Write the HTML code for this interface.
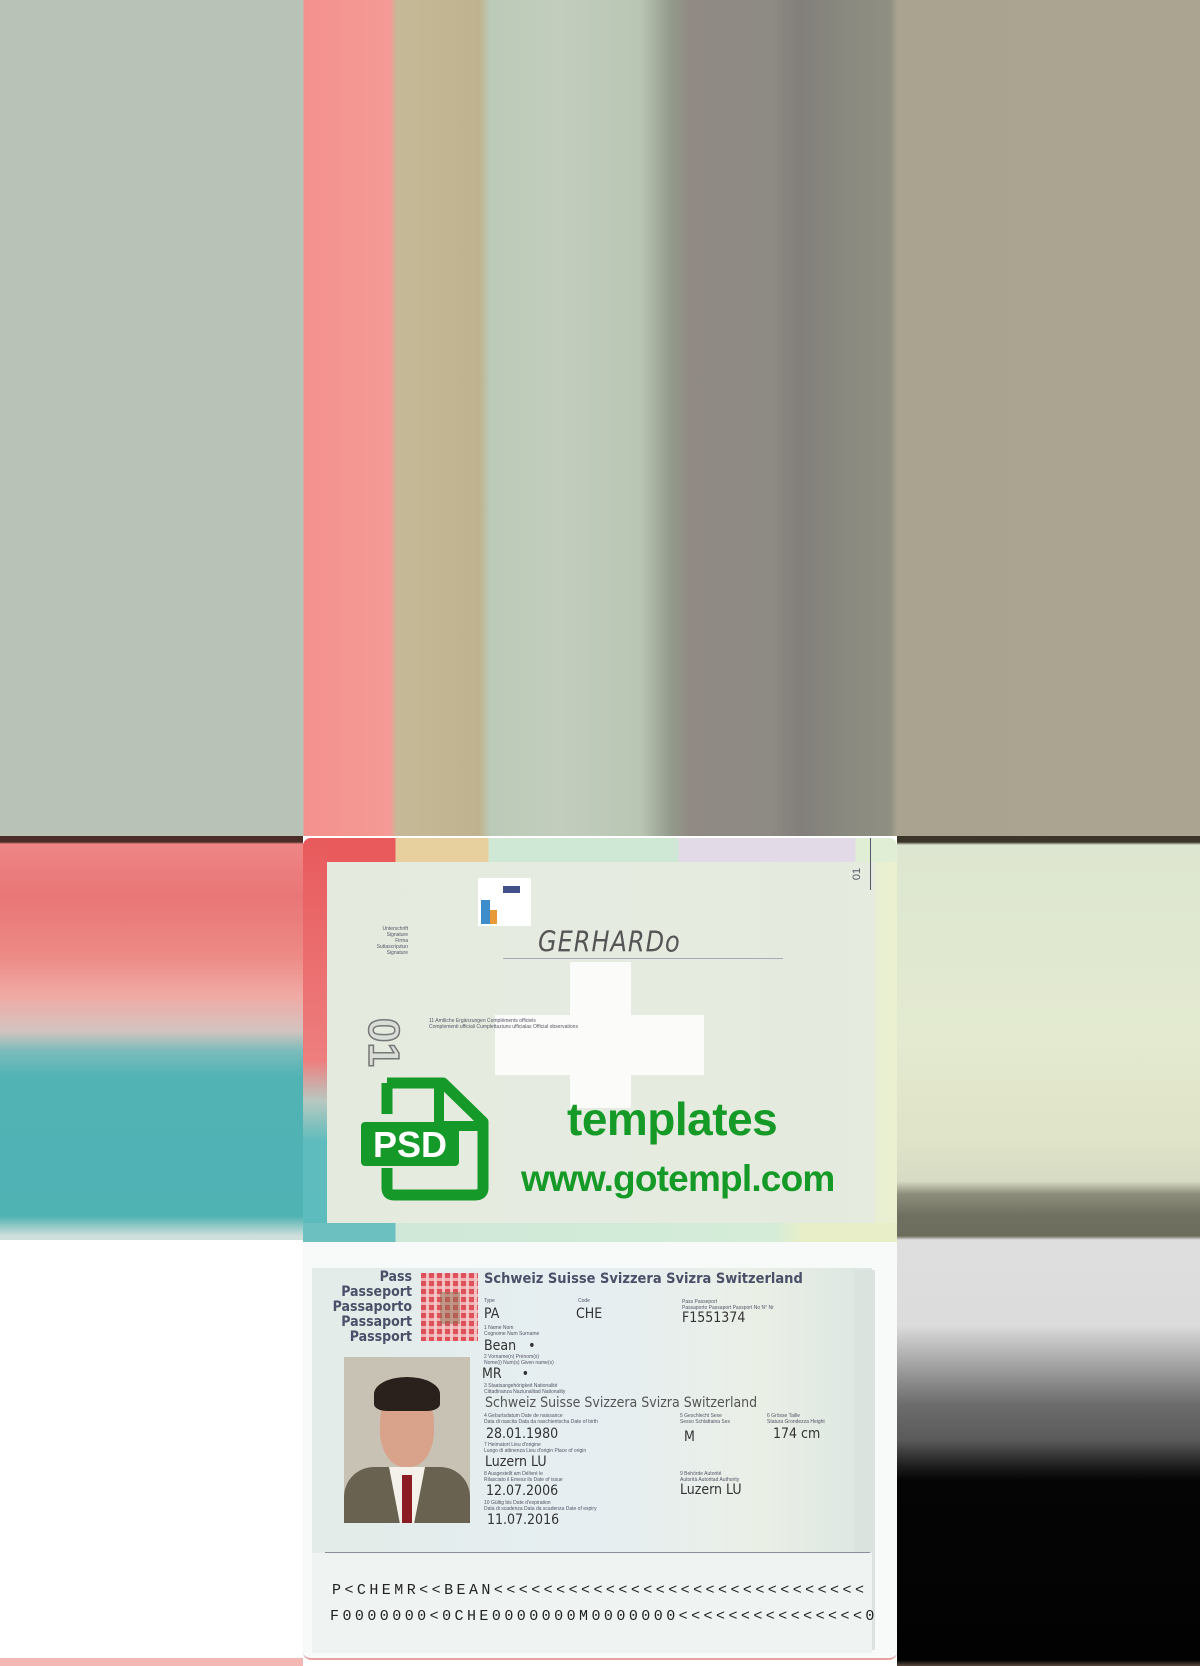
<!DOCTYPE html>
<html><head><meta charset="utf-8"><style>
*{margin:0;padding:0;box-sizing:border-box}
body{width:1200px;height:1666px;position:relative;overflow:hidden;background:#fff;font-family:"Liberation Sans",sans-serif}
.a{position:absolute}
.lbl{position:absolute;font-size:5px;color:#556;line-height:6px;white-space:nowrap}
.v{position:absolute;font-size:14px;color:#333;white-space:nowrap;font-family:"DejaVu Sans Condensed","Liberation Sans",sans-serif}
.pt{position:absolute;font-weight:bold;color:#4a5068;font-size:14px;font-family:"DejaVu Sans Condensed","Liberation Sans",sans-serif;white-space:nowrap}
</style></head><body>
<div class="a" style="left:0;top:0;width:1200px;height:836px;background:linear-gradient(90deg,#b9c2b6 0,#b9c2b6 303px,#f3918e 304px,#f59a96 390px,#c5b997 397px,#bfb38f 480px,#bccab8 490px,#c2cdbd 560px,#bac6b4 640px,#92998a 672px,#918a84 690px,#8e8a84 770px,#827f7a 800px,#8a8a80 850px,#8f8f82 890px,#a9a390 897px,#aaa491 1200px)"></div>
<div class="a" style="left:0;top:836px;width:303px;height:404px;background:linear-gradient(180deg,#4a2d28 0,#4a2d28 6px,#ee8585 8px,#e97677 60px,#ec8a86 120px,#f1aaa4 160px,#d3c3bf 195px,#7bbcbb 215px,#52b3b5 240px,#4fb2b3 380px,#cfdfdc 400px)"></div>
<div class="a" style="left:897px;top:836px;width:303px;height:404px;background:linear-gradient(180deg,#3a3528 0,#3a3528 6px,#dde6d0 9px,#e3ead0 200px,#e0e4c8 300px,#d8dbc4 345px,#8d8e7c 358px,#6f705f 380px,#6c6d5c 400px,#e0e0e0 404px)"></div>
<div class="a" style="left:897px;top:1240px;width:303px;height:426px;background:linear-gradient(180deg,#dedede 0,#dcdcdc 85px,#c6c6c6 100px,#8e8e8e 140px,#6c6c6c 165px,#5a5a5a 200px,#202020 225px,#050505 240px,#020202 420px,#5a4a40 426px)"></div>
<div class="a" style="left:0;top:1658px;width:303px;height:8px;background:#f4b8b4"></div>

<div class="a" style="left:303px;top:838px;width:594px;height:404px;border-radius:8px 8px 0 0;background:linear-gradient(90deg,#e6ecdf,#e9eee4 50%,#e4ecd9 90%,#eaf0cf);overflow:hidden">
 <div class="a" style="left:0;top:0;width:594px;height:24px;background:linear-gradient(90deg,#e85a5c 0,#e85a5c 92px,#e7cf9e 93px,#e7cf9e 185px,#cfe8d6 186px,#cfe8d6 375px,#e3dae8 376px,#e3dae8 552px,#dfeed5 553px)"></div>
 <div class="a" style="left:0;top:0;width:24px;height:404px;background:linear-gradient(180deg,#e85a5c,#ee7e7e 55%,#b8c8c0 65%,#5fbcbe 75%,#5cbcbd)"></div>
 <div class="a" style="left:0;top:385px;width:594px;height:19px;background:linear-gradient(90deg,#6cc0c0 0,#6cc0c0 92px,#cfe8d8 93px,#d4ecd8 470px,#e8efc8 500px)"></div>
 <div class="a" style="left:24px;top:24px;width:548px;height:361px;background:#e4eadf;opacity:.9"></div>
 <div class="a" style="left:267px;top:124px;width:61px;height:146px;background:#fbfcf9"></div>
 <div class="a" style="left:192px;top:177px;width:209px;height:60px;background:#fbfcf9"></div>
 <div class="a" style="left:175px;top:40px;width:53px;height:48px;background:#fff"></div>
 <div class="a" style="left:178px;top:62px;width:9px;height:24px;background:#3d8ccc"></div>
 <div class="a" style="left:187px;top:72px;width:7px;height:14px;background:#e89a3a"></div>
 <div class="a" style="left:200px;top:48px;width:17px;height:7px;background:#44508a"></div>
 <div class="a" style="left:567px;top:0;width:1px;height:52px;background:#556"></div>
 <div class="a" style="left:548px;top:30px;font-size:11px;color:#556;transform:rotate(-90deg)">01</div>
 <div class="lbl" style="left:55px;top:88px;text-align:right;width:50px">Unterschrift<br>Signature<br>Firma<br>Suttascripziun<br>Signature</div>
 <div class="a" style="left:235px;top:90px;font-family:'DejaVu Sans',sans-serif;font-weight:200;font-style:italic;font-size:24px;color:#555;letter-spacing:1px;transform:scaleY(1.2)">GERHARDo</div>
 <div class="a" style="left:200px;top:120px;width:280px;height:1px;background:#aab"></div>
 <div class="lbl" style="left:126px;top:180px">11 Amtliche Ergänzungen Compléments officiels<br>Complementi ufficiali Cumplettaziuns ufficialas Official observations</div>
 <div class="a" style="top:180px;font-size:44px;color:#d8ddd8;-webkit-text-stroke:1.5px #777;transform:rotate(90deg);transform-origin:left top;left:105px;font-weight:bold">01</div>
 <svg class="a" style="left:56px;top:238px" width="134" height="125" viewBox="0 0 134 125">
  <path d="M28 7 H84 L124 46 V112 Q124 119 116 119 H35 Q28 119 28 112 V92 M28 38 V7" fill="none" stroke="#159a2a" stroke-width="11" stroke-linejoin="round"/>
  <path d="M80 7 V44 Q80 50 86 50 H124" fill="none" stroke="#159a2a" stroke-width="10"/>
  <rect x="2" y="46" width="98" height="44" rx="4" fill="#159a2a"/>
  <text x="51" y="81" text-anchor="middle" font-family="Liberation Sans" font-weight="bold" font-size="36" fill="#fff">PSD</text>
 </svg>
 <div class="a" style="left:264px;top:254px;font-size:46px;font-weight:bold;color:#169a27;letter-spacing:-0.5px">templates</div>
 <div class="a" style="left:218px;top:320px;font-size:37px;font-weight:bold;color:#169a27;letter-spacing:-0.8px">www.gotempl.com</div>
</div>

<div class="a" style="left:303px;top:1242px;width:594px;height:418px;background:#f8faf9;border-radius:0 0 8px 8px;border-bottom:2px solid #e8a0a0"></div>
<div class="a" style="left:312px;top:1268px;width:560px;height:285px;background:linear-gradient(90deg,#e3ece8,#e6eef2 50%,#eaefe6 80%,#dce6e2)"></div>
<div class="a" style="left:855px;top:1270px;width:20px;height:380px;background:#dbe3df"></div>
<div class="a" style="left:312px;top:1553px;width:560px;height:100px;background:#eff3f2"></div>
<div class="a" style="left:325px;top:1552px;width:545px;height:1px;background:#8a8f99"></div>
<div class="pt" style="left:320px;top:1270px;width:92px;text-align:right;line-height:15px">Pass<br>Passeport<br>Passaporto<br>Passaport<br>Passport</div>
<div class="a" style="left:421px;top:1273px;width:57px;height:68px;background:repeating-linear-gradient(90deg,#e0505a 0 5px,#f3c0c2 5px 8px)"></div>
<div class="a" style="left:421px;top:1273px;width:57px;height:68px;background:repeating-linear-gradient(180deg,transparent 0 5px,rgba(243,200,200,.8) 5px 8px)"></div>
<div class="a" style="left:440px;top:1292px;width:20px;height:32px;background:rgba(140,110,80,.5)"></div>
<div class="pt" style="left:484px;top:1271px;font-size:14.5px">Schweiz Suisse Svizzera Svizra Switzerland</div>
<div class="lbl" style="left:484px;top:1298px">Type</div>
<div class="lbl" style="left:578px;top:1298px">Code</div>
<div class="lbl" style="left:682px;top:1299px">Pass Passeport<br>Passaporto Passaport Passport No N° Nr</div>
<div class="v" style="left:484px;top:1306px">PA</div>
<div class="v" style="left:576px;top:1306px">CHE</div>
<div class="v" style="left:682px;top:1310px">F1551374</div>
<div class="lbl" style="left:484px;top:1325px">1 Name Nom<br>Cognome Num Surname</div>
<div class="v" style="left:484px;top:1338px">Bean &nbsp; •</div>
<div class="lbl" style="left:484px;top:1354px">2 Vorname(n) Prénom(s)<br>Nome(i) Num(s) Given name(s)</div>
<div class="v" style="left:482px;top:1366px">MR &nbsp;&nbsp;&nbsp; •</div>
<div class="lbl" style="left:484px;top:1383px">3 Staatsangehörigkeit Nationalité<br>Cittadinanza Naziunalitad Nationality</div>
<div class="v" style="left:485px;top:1395px;color:#555">Schweiz Suisse Svizzera Svizra Switzerland</div>
<div class="lbl" style="left:484px;top:1413px">4 Geburtsdatum Date de naissance<br>Data di nascita Data da naschientscha Date of birth</div>
<div class="lbl" style="left:680px;top:1413px">5 Geschlecht Sexe<br>Sesso Schlattaina Sex</div>
<div class="lbl" style="left:767px;top:1413px">6 Grösse Taille<br>Statura Grondezza Height</div>
<div class="v" style="left:486px;top:1426px">28.01.1980</div>
<div class="v" style="left:684px;top:1429px">M</div>
<div class="v" style="left:773px;top:1426px">174 cm</div>
<div class="lbl" style="left:484px;top:1442px">7 Heimatort Lieu d'origine<br>Luogo di attinenza Lieu d'origin Place of origin</div>
<div class="v" style="left:485px;top:1454px">Luzern LU</div>
<div class="lbl" style="left:484px;top:1471px">8 Ausgestellt am Délivré le<br>Rilasciato il Emess ils Date of issue</div>
<div class="lbl" style="left:680px;top:1471px">9 Behörde Autorité<br>Autorità Autoritad Authority</div>
<div class="v" style="left:486px;top:1483px">12.07.2006</div>
<div class="v" style="left:680px;top:1482px">Luzern LU</div>
<div class="lbl" style="left:484px;top:1500px">10 Gültig bis Date d'expiration<br>Data di scadenza Data da scadenza Date of expiry</div>
<div class="v" style="left:487px;top:1512px">11.07.2016</div>
<div class="a" style="left:344px;top:1357px;width:126px;height:166px;background:#c8c2b4;overflow:hidden">
 <div class="a" style="left:0;top:110px;width:126px;height:56px;background:#6a6250;border-radius:30px 30px 0 0"></div>
 <div class="a" style="left:45px;top:110px;width:36px;height:56px;background:#f4f0ea;clip-path:polygon(0 0,100% 0,70% 100%,30% 100%)"></div>
 <div class="a" style="left:58px;top:118px;width:10px;height:48px;background:#8c1c24"></div>
 <div class="a" style="left:36px;top:30px;width:54px;height:80px;background:#d8a38a;border-radius:45%"></div>
 <div class="a" style="left:30px;top:20px;width:66px;height:34px;background:#2a201c;border-radius:50% 50% 20% 20%"></div>
</div>
<div class="a" style="left:332px;top:1582px;font-family:'Liberation Mono',monospace;font-size:15px;color:#222;letter-spacing:3.45px;white-space:nowrap">P&lt;CHEMR&lt;&lt;BEAN&lt;&lt;&lt;&lt;&lt;&lt;&lt;&lt;&lt;&lt;&lt;&lt;&lt;&lt;&lt;&lt;&lt;&lt;&lt;&lt;&lt;&lt;&lt;&lt;&lt;&lt;&lt;&lt;&lt;&lt;</div>
<div class="a" style="left:330px;top:1608px;font-family:'Liberation Mono',monospace;font-size:15px;color:#222;letter-spacing:3.45px;white-space:nowrap">F0000000&lt;0CHE0000000M0000000&lt;&lt;&lt;&lt;&lt;&lt;&lt;&lt;&lt;&lt;&lt;&lt;&lt;&lt;&lt;0</div>
</body></html>
